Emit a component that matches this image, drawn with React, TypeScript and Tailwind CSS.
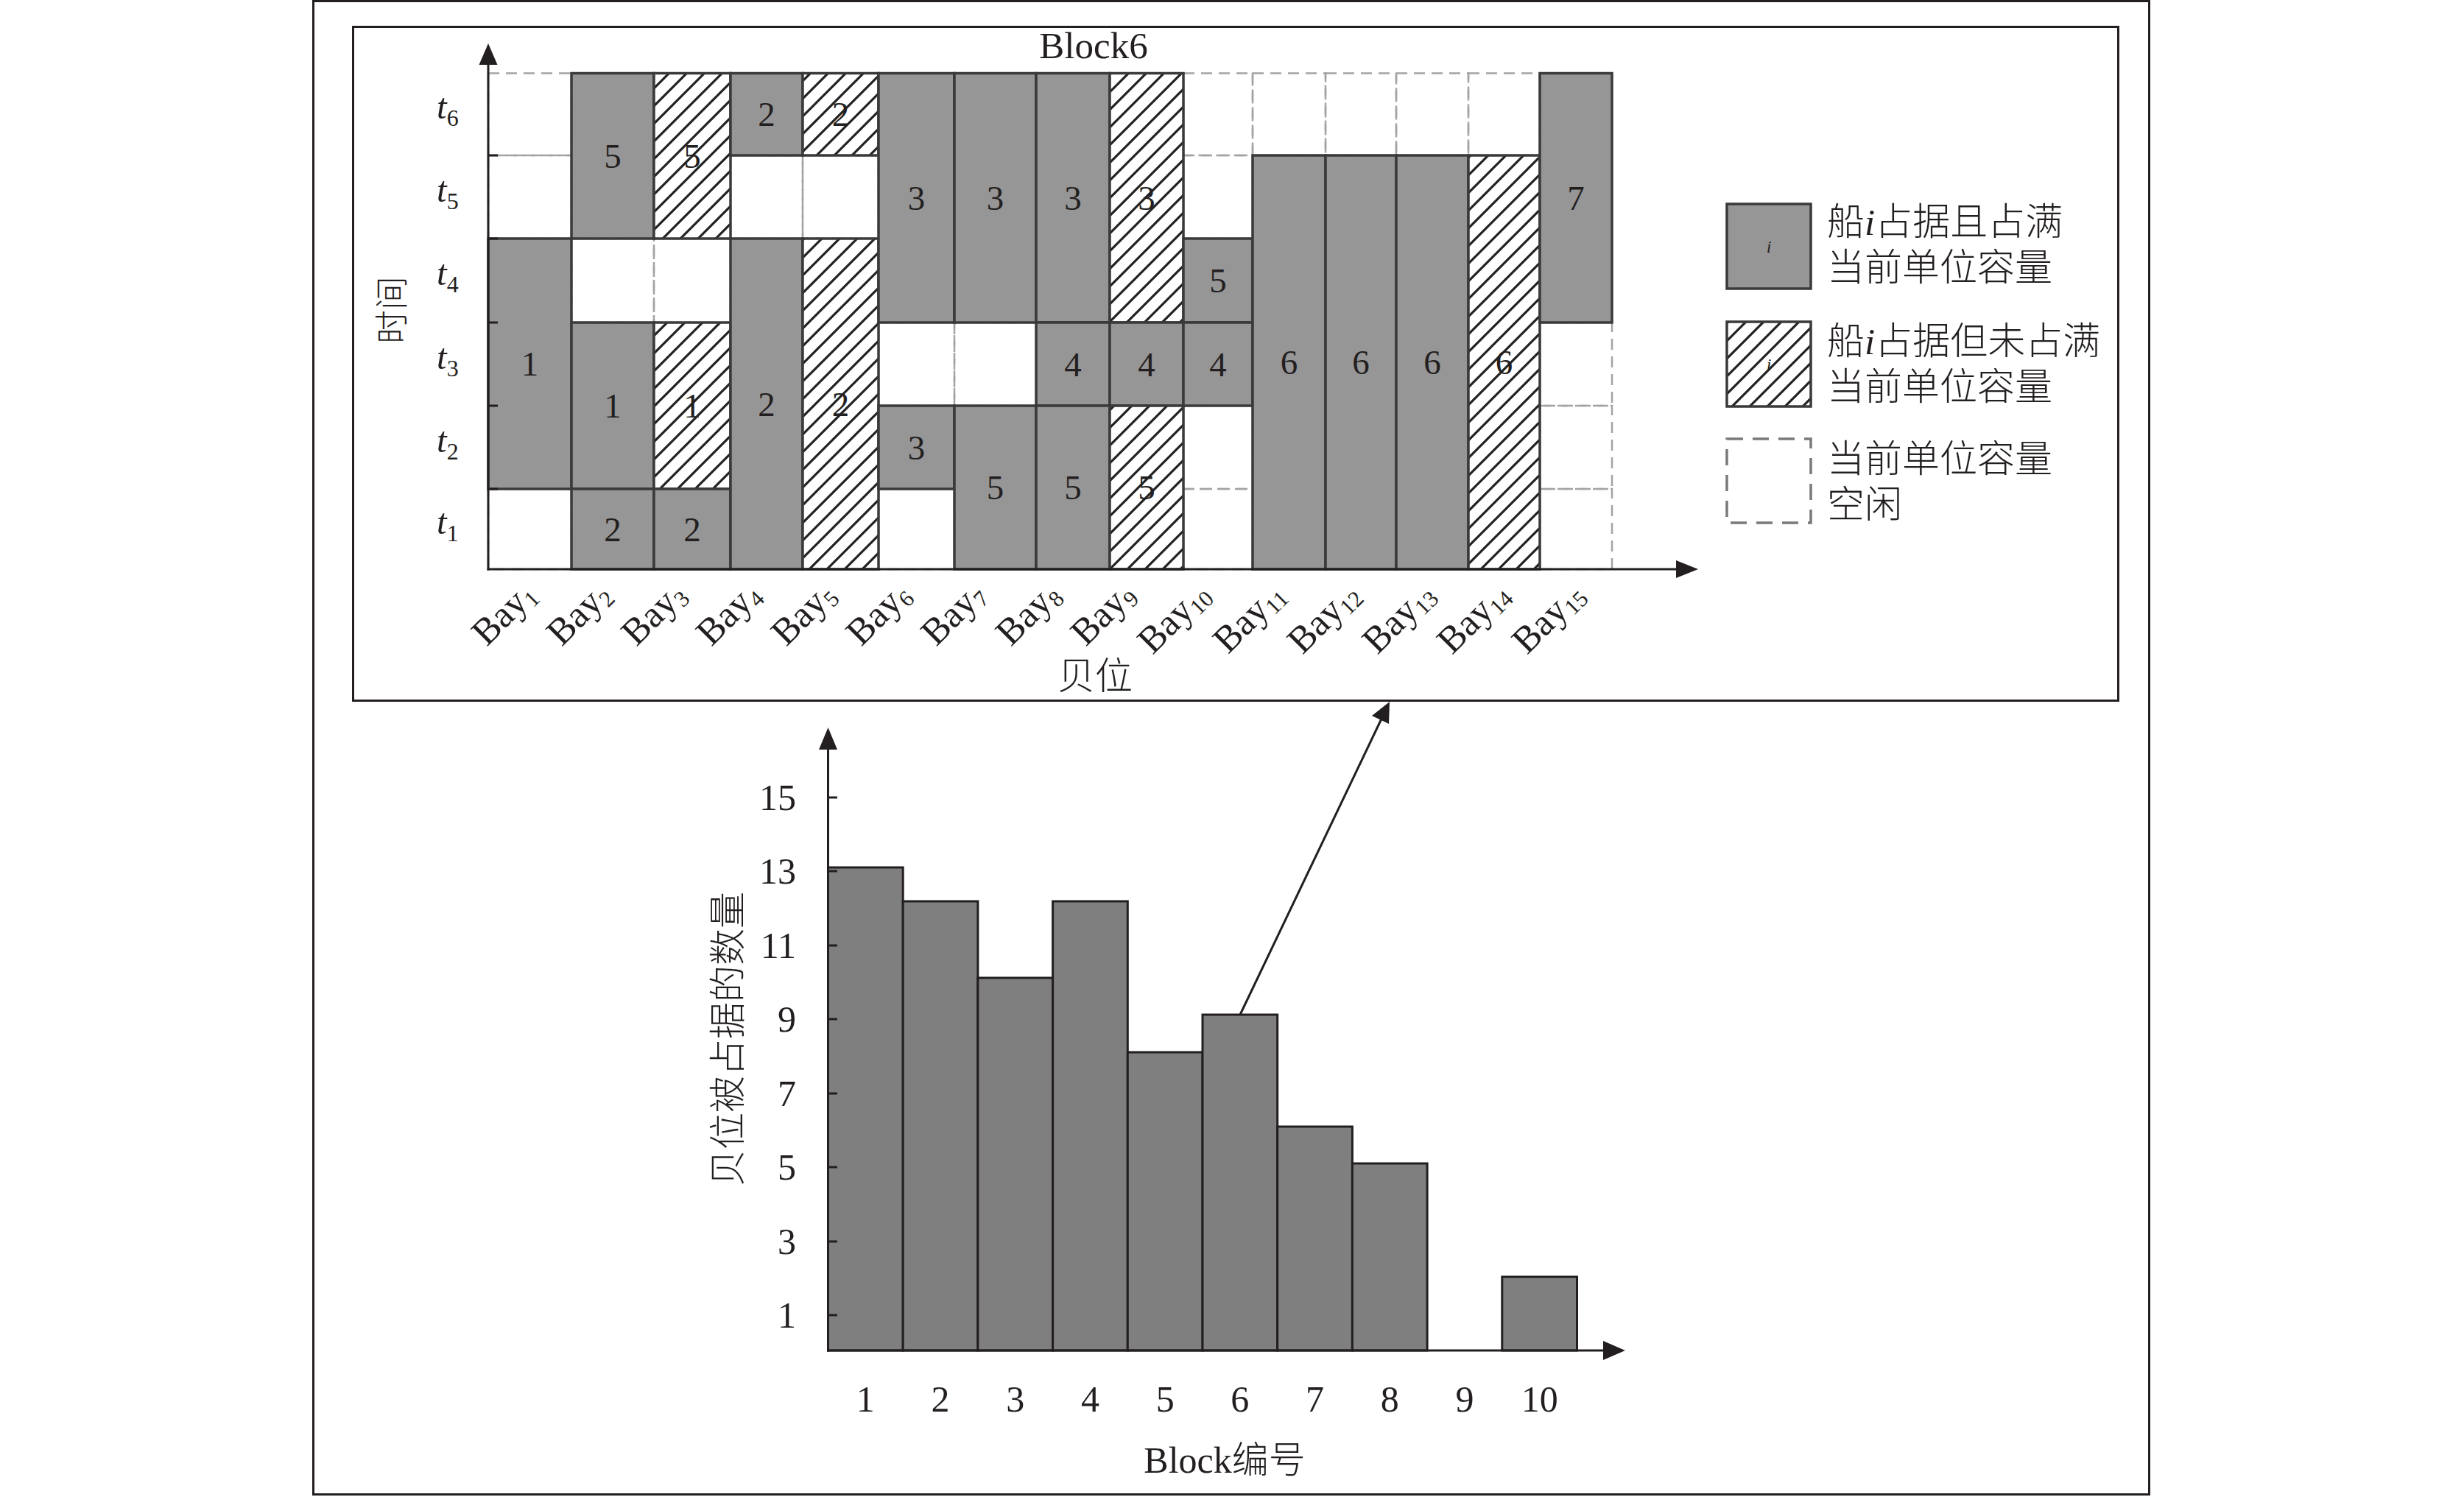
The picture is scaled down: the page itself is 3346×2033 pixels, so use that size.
const SERIF = "'Liberation Serif', 'Noto Sans CJK SC', serif";
const CJK = "'Noto Sans CJK SC', 'Liberation Serif', sans-serif";
const INK = "#231f20";
const CELL = "#969696";
const EDGE = "#3a3a3a";
const DASH = "#a3a3a3";

// bay column edges and row edges (page coordinates)
const COLS = [663, 776, 888, 992, 1090, 1193, 1296, 1407, 1507, 1607, 1701, 1800, 1896, 1994, 2091, 2189];
const ROWS = [773, 664, 551, 438, 324, 211, 99.5];

type Kind = "full" | "hatch" | "empty";
type Seg = { from: number; to: number; kind: Kind; ship?: number };

const e = (r: number): Seg => ({ from: r, to: r, kind: "empty" });
const f = (from: number, to: number, ship: number): Seg => ({ from, to, kind: "full", ship });
const h = (from: number, to: number, ship: number): Seg => ({ from, to, kind: "hatch", ship });

const BAYS: Seg[][] = [
  [e(6), e(5), f(2, 4, 1), e(1)],
  [f(5, 6, 5), e(4), f(2, 3, 1), f(1, 1, 2)],
  [h(5, 6, 5), e(4), h(2, 3, 1), f(1, 1, 2)],
  [f(6, 6, 2), e(5), f(1, 4, 2)],
  [h(6, 6, 2), e(5), h(1, 4, 2)],
  [f(4, 6, 3), e(3), f(2, 2, 3), e(1)],
  [f(4, 6, 3), e(3), f(1, 2, 5)],
  [f(4, 6, 3), f(3, 3, 4), f(1, 2, 5)],
  [h(4, 6, 3), f(3, 3, 4), h(1, 2, 5)],
  [e(6), e(5), f(4, 4, 5), f(3, 3, 4), e(2), e(1)],
  [e(6), f(1, 5, 6)],
  [e(6), f(1, 5, 6)],
  [e(6), f(1, 5, 6)],
  [e(6), h(1, 5, 6)],
  [f(4, 6, 7), e(3), e(2), e(1)],
];

// lower chart bars: top y of each bar (null = empty block)
const BAR_X0 = 1124.5;
const BAR_W = 101.7;
const AXIS_Y = 1834;
const BAR_TOPS: (number | null)[] = [1178, 1224, 1328, 1224, 1429, 1378, 1530, 1580, null, 1734];
const Y_TICKS = [
  { v: 15, y: 1083 },
  { v: 13, y: 1183 },
  { v: 11, y: 1284 },
  { v: 9, y: 1384 },
  { v: 7, y: 1485 },
  { v: 5, y: 1585 },
  { v: 3, y: 1686 },
  { v: 1, y: 1786 },
];

function HatchDefs() {
  return (
    <defs>
      <pattern id="hatch" patternUnits="userSpaceOnUse" width="24" height="24">
        <rect width="24" height="24" fill="#ffffff" />
        <path d="M-6,6 L6,-6 M0,24 L24,0 M18,30 L30,18" stroke="#222" strokeWidth="3.2" />
      </pattern>
    </defs>
  );
}

function Grid() {
  const empties: JSX.Element[] = [];
  const blocks: JSX.Element[] = [];
  BAYS.forEach((segs, i) => {
    const x = COLS[i];
    const w = COLS[i + 1] - COLS[i];
    segs.forEach((s, j) => {
      const y = ROWS[s.to];
      const hgt = ROWS[s.from - 1] - ROWS[s.to];
      if (s.kind === "empty") {
        empties.push(
          <rect key={`e${i}-${j}`} x={x} y={y} width={w} height={hgt} fill="none" stroke={DASH} strokeWidth="2.5" strokeDasharray="15 9" />
        );
      } else {
        blocks.push(
          <g key={`b${i}-${j}`}>
            <rect x={x} y={y} width={w} height={hgt} fill={s.kind === "full" ? CELL : "url(#hatch)"} stroke={EDGE} strokeWidth="3.5" />
            <text x={x + w / 2} y={y + hgt / 2 + 16} textAnchor="middle" fontSize="47" fontFamily={SERIF} fill={INK}>
              {s.ship}
            </text>
          </g>
        );
      }
    });
  });
  return (
    <g>
      {empties}
      {blocks}
    </g>
  );
}

function UpperChart() {
  return (
    <svg width="2394" height="912" viewBox="481 38 2394 912" className="block overflow-visible">
      <HatchDefs />
      <text x="1485" y="79" textAnchor="middle" fontSize="51" fontFamily={SERIF} fill={INK}>
        Block6
      </text>

      <Grid />

      {/* axes */}
      <line x1="663" y1="774.5" x2="663" y2="80" stroke={INK} strokeWidth="3" />
      <polygon points="663,59 650.5,88 675.5,88" fill={INK} />
      <line x1="661.5" y1="773" x2="2285" y2="773" stroke={INK} strokeWidth="3" />
      <polygon points="2306,773 2276,761 2276,785" fill={INK} />
      {[211, 324, 438, 551, 664].map((y) => (
        <line key={y} x1="663" y1={y} x2="676" y2={y} stroke={INK} strokeWidth="3" />
      ))}

      {/* t labels */}
      {[1, 2, 3, 4, 5, 6].map((r) => (
        <text key={r} x="593" y={(ROWS[r] + ROWS[r - 1]) / 2 + 6} fontSize="49" fontFamily={SERIF} fill={INK}>
          <tspan fontStyle="italic">t</tspan>
          <tspan fontSize="32" dy="10">{r}</tspan>
        </text>
      ))}

      <text
        transform="translate(548 421) rotate(-90)"
        textAnchor="middle"
        fontSize="46"
        fontWeight="300"
        fontFamily={CJK}
        fill={INK}
      >
        时间
      </text>

      {/* bay labels, evenly spaced under the columns */}
      {BAYS.map((_, i) => (
        <text
          key={i}
          transform={`translate(${730 + i * 101.7} 810) rotate(-45)`}
          textAnchor="end"
          fontSize="51"
          fontFamily={SERIF}
          fill={INK}
        >
          Bay
          <tspan fontSize="31" dy="7">{i + 1}</tspan>
        </text>
      ))}

      <text x="1487" y="936" textAnchor="middle" fontSize="51" fontWeight="300" fontFamily={CJK} fill={INK}>
        贝位
      </text>

      {/* legend */}
      <rect x="2345" y="277" width="114" height="115" fill={CELL} stroke={EDGE} strokeWidth="3.5" />
      <text x="2402" y="343" textAnchor="middle" fontSize="24" fontStyle="italic" fontFamily={SERIF} fill={INK}>
        i
      </text>
      <rect x="2345" y="437" width="114" height="115" fill="url(#hatch)" stroke={EDGE} strokeWidth="3.5" />
      <text x="2402" y="503" textAnchor="middle" fontSize="24" fontStyle="italic" fontFamily={SERIF} fill={INK}>
        i
      </text>
      <rect x="2345" y="596" width="114" height="114" fill="none" stroke="#7a7a7a" strokeWidth="3.5" strokeDasharray="22 13" />

      <g fontSize="51" fontWeight="300" fontFamily={CJK} fill={INK}>
        <text x="2481" y="319">
          船<tspan fontFamily={SERIF} fontStyle="italic" fontWeight="400">i</tspan>占据且占满
        </text>
        <text x="2481" y="381">当前单位容量</text>
        <text x="2481" y="481">
          船<tspan fontFamily={SERIF} fontStyle="italic" fontWeight="400">i</tspan>占据但未占满
        </text>
        <text x="2481" y="543">当前单位容量</text>
        <text x="2481" y="641">当前单位容量</text>
        <text x="2481" y="703">空闲</text>
      </g>
    </svg>
  );
}

function LowerChart() {
  return (
    <svg width="2490" height="1075" viewBox="427 953 2490 1075" className="block overflow-visible">
      {BAR_TOPS.map((top, i) =>
        top === null ? null : (
          <rect
            key={i}
            x={BAR_X0 + i * BAR_W}
            y={top}
            width={BAR_W}
            height={AXIS_Y - top}
            fill="#807f80"
            stroke={INK}
            strokeWidth="3"
          />
        )
      )}

      {/* pointer to Block6 */}
      <line x1="1684" y1="1378" x2="1878" y2="972" stroke={INK} strokeWidth="3" />
      <polygon points="1887,953 1863,972 1886,983" fill={INK} />

      {/* axes */}
      <line x1="1124.5" y1="1835.5" x2="1124.5" y2="1010" stroke={INK} strokeWidth="3" />
      <polygon points="1124.5,988 1112,1018 1137,1018" fill={INK} />
      <line x1="1123" y1="1834" x2="2185" y2="1834" stroke={INK} strokeWidth="3" />
      <polygon points="2207,1834 2177,1821 2177,1847" fill={INK} />
      {Y_TICKS.map((t) => (
        <g key={t.v}>
          <line x1="1124.5" y1={t.y} x2="1137" y2={t.y} stroke={INK} strokeWidth="3" />
          <text x="1081" y={t.y + 17} textAnchor="end" fontSize="50" fontFamily={SERIF} fill={INK}>
            {t.v}
          </text>
        </g>
      ))}

      {BAR_TOPS.map((_, i) => (
        <text
          key={i}
          x={BAR_X0 + i * BAR_W + BAR_W / 2}
          y="1917"
          textAnchor="middle"
          fontSize="50"
          fontFamily={SERIF}
          fill={INK}
        >
          {i + 1}
        </text>
      ))}

      <text x="1663" y="2000" textAnchor="middle" fontSize="50" fontFamily={SERIF} fill={INK}>
        Block<tspan fontFamily={CJK} fontWeight="300">编号</tspan>
      </text>
      <text
        transform="translate(1006 1411) rotate(-90)"
        textAnchor="middle"
        fontSize="50"
        fontWeight="300"
        fontFamily={CJK}
        fill={INK}
      >
        贝位被占据的数量
      </text>
    </svg>
  );
}

export default function App() {
  return (
    <div className="h-[2033px] w-[3346px] bg-white pl-[424px]">
      <div className="flex h-[2031px] w-[2496px] flex-col border-[3px] border-[#231f20]">
        <div className="ml-[51px] mt-[32px] h-[918px] w-[2400px] border-[3px] border-[#231f20]">
          <UpperChart />
        </div>
        <LowerChart />
      </div>
    </div>
  );
}
